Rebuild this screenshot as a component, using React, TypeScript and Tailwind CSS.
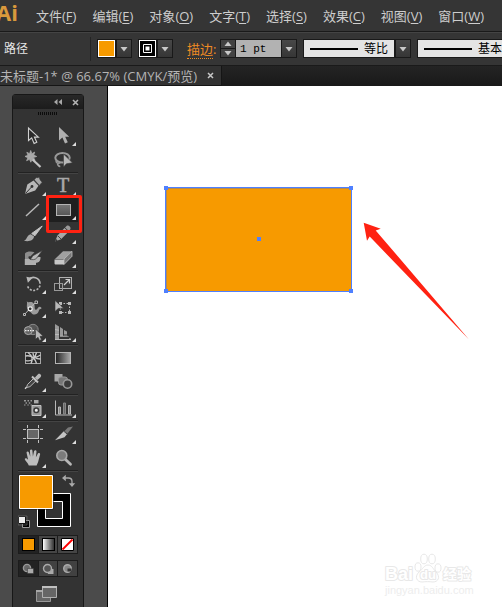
import type { ReactNode } from "react";

const MENUS = [
  ["文件", "F"],
  ["编辑", "E"],
  ["对象", "O"],
  ["文字", "T"],
  ["选择", "S"],
  ["效果", "C"],
  ["视图", "V"],
  ["窗口", "W"],
];

type Tool = { name: string; icon: ReactNode; more?: boolean; active?: boolean };

const LIGHT = "#b8b8b8";
const MID = "#777777";

const TOOL_GROUPS: Tool[][] = [
  [
    {
      name: "选择",
      icon: <path d="M10.5 4v12.5l3.2-2.6 2.4 5.6 2.7-1.2-2.4-5.2h4z" fill="#2a2a2a" stroke="#d0d0d0" strokeWidth="1.1" />,
    },
    {
      name: "直接选择",
      more: true,
      icon: <path d="M11 3v13.5l3.4-3 2.6 6 2.8-1.2-2.6-5.5h4z" fill="#b0b0b0" />,
    },
    {
      name: "魔棒",
      icon: (
        <>
          <path d="M12.7 2.5l1.2 3.2 2.8-1.6-1 3 3 1.4-3.2.9 1.6 3-3-1.2-1.3 3-1.3-2.9-2.9 1.4 1.3-3L7 8.4l3-1.1-1.2-3 2.8 1.4z" fill="#a8a8a8" stroke="#a8a8a8" strokeWidth=".8" />
          <path d="M14.5 11.5l8 7.5" stroke="#c4c4c4" strokeWidth="2.2" />
        </>
      ),
    },
    {
      name: "套索",
      icon: (
        <>
          <ellipse cx="14.5" cy="9.8" rx="7.2" ry="4.8" fill="none" stroke="#999" strokeWidth="2" />
          <path d="M8.5 12.5c-1.5 2 1.8 3.5 3.8 2.2M9.5 15c0 2 .8 3.4 2.8 3.5" fill="none" stroke="#999" strokeWidth="1.5" />
          <path d="M15.5 6v13l2.9-3.2 6-1z" fill={LIGHT} stroke="#3a3a3a" strokeWidth=".6" />
        </>
      ),
    },
  ],
  [
    {
      name: "钢笔",
      more: true,
      icon: (
        <>
          <path d="M7 20l2.3-9.5 6.2-4 5 5.3-3.3 4.8z" fill={LIGHT} />
          <path d="M16.2 5.8l2-2.3 2 .2.8-1 1.2 3.3 2 2.2-2.8 3.2z" fill="#a8a8a8" stroke="#333" strokeWidth=".6" />
          <path d="M7.5 19.5l6-6.5" stroke="#333" />
          <circle cx="14" cy="12.5" r="1.4" fill="#333" />
        </>
      ),
    },
    {
      name: "文字",
      more: true,
      icon: (
        <text x="15" y="18" textAnchor="middle" fontFamily="Liberation Serif, serif" fontSize="20" fill="#a8a8a8" stroke="#a8a8a8" strokeWidth=".5">
          T
        </text>
      ),
    },
    { name: "直线段", more: true, icon: <path d="M8 18L21 6" stroke="#b8b8b8" strokeWidth="1.5" /> },
    {
      name: "矩形",
      more: true,
      active: true,
      icon: <rect x="8.5" y="6.5" width="14" height="11" fill="url(#rectShade)" stroke="#b4b4b4" />,
    },
    {
      name: "画笔",
      icon: (
        <>
          <path d="M24.2 4l-7.3 9.8-3.2-2.3z" fill="#c4c4c4" stroke="#c4c4c4" strokeLinejoin="round" />
          <path d="M12.8 12.2l3.3 2.4c-.6 4.2-5 5.2-10.3 4.2 3.6-.8 2.6-6 7-6.6z" fill="#a8a8a8" />
        </>
      ),
    },
    {
      name: "铅笔",
      more: true,
      icon: (
        <>
          <path d="M7 19.5l2.5-6 7-7.5 4 3.8-7.5 7.4z" fill="#a8a8a8" />
          <path d="M17 5.5l1.8-1.7c1.6-1.3 5 1.8 3.4 3.6L20.8 9z" fill="#9a9a9a" />
          <path d="M10 14l3 3" stroke="#444" />
          <path d="M7 19.5l1-2.6 1.7 1.6z" fill="#333" />
        </>
      ),
    },
    {
      name: "斑点画笔",
      icon: (
        <>
          <path d="M7 7.5c2-2.5 6.5-2.3 9.5-1.2l-4.2 4.2c-2-.7-2.6 1-1 2.5H7z" fill="#8d8d8d" />
          <path d="M6.8 13h6.6c3.6.2 4.5-.8 6-2.2l3.1.2c.2 4-1.4 5.5-4.5 5.8V19H6.8z" fill="#b0b0b0" />
          <path d="M24.6 4.2l-6 8c-1.5 1.7-4.3 1.7-6.7 1.1 2.2-.6 1.6-3 3.8-4z" fill={LIGHT} stroke="#333" strokeWidth=".7" />
        </>
      ),
    },
    {
      name: "橡皮擦",
      more: true,
      icon: (
        <>
          <path d="M7 13l8-7.7h9L16 13z" fill="#a0a0a0" />
          <path d="M16 13l8-7.7v5L16 18.5z" fill={MID} stroke="#c4c4c4" strokeWidth=".8" />
          <path d="M6.5 13.5H16v5H8.2c-1.3 0-1.7-.7-1.7-1.6z" fill="#c8c8c8" />
        </>
      ),
    },
  ],
  [
    {
      name: "旋转",
      more: true,
      icon: (
        <>
          <path d="M10.3 8.2a6.5 6.5 0 0 1 11.8 3.6" fill="none" stroke={LIGHT} strokeWidth="1.6" />
          <path d="M22 13.5a6.5 6.5 0 0 1-12.7-.3" fill="none" stroke={LIGHT} strokeWidth="1.6" strokeDasharray="2 1.5" />
          <path d="M8.4 4.8l6 1.2-4.5 4.8z" fill={LIGHT} />
        </>
      ),
    },
    {
      name: "比例缩放",
      more: true,
      icon: (
        <>
          <rect x="11.5" y="5.5" width="12" height="11" fill="#3b3b3b" stroke="#b0b0b0" />
          <rect x="6.5" y="11.5" width="8" height="7" fill="none" stroke="#999" />
          <path d="M16 13l5-5M17.5 7.5h4v4" fill="none" stroke="#d0d0d0" strokeWidth="1.2" />
        </>
      ),
    },
    {
      name: "变形",
      more: true,
      icon: (
        <>
          <path d="M8.8 5c1.8 3.2 4.8-1.2 7.4 3.3 1 2.1-.2 5 1.6 5.5 1.6.3 2-2.7 3.7-3 1.7-.2 2.4 1.4 1.5 2.4-1.1-.7-1.7.1-2.3 2-1.2 3.5-5.4 4.4-7.3 1.8L9 12c-.5-2.5.5-4.5-.2-7z" fill="#9b9b9b" />
          <path d="M6.5 18.5L17 7" stroke={LIGHT} />
          <path d="M5.5 17.5h2v2h-2zM17 5h2.5v2.5H17z" fill="#333" stroke={LIGHT} />
          <circle cx="12.2" cy="12.8" r="2" fill="#333" stroke="#eee" strokeWidth="1.2" />
        </>
      ),
    },
    {
      name: "自由变换",
      icon: (
        <>
          <rect x="12.5" y="7.5" width="9" height="9" fill="none" stroke={LIGHT} strokeDasharray="1.5 1.5" />
          <path d="M11 6h3v3h-3zM20 6h3v3h-3zM11 15h3v3h-3zM20 15h3v3h-3z" fill={LIGHT} />
          <path d="M7 4.5v11l3.2-3 5.4-.3z" fill={LIGHT} stroke="#333" strokeWidth=".6" />
        </>
      ),
    },
    {
      name: "形状生成器",
      more: true,
      icon: (
        <>
          <circle cx="15" cy="9.5" r="5.2" fill="#555" stroke="#888" />
          <circle cx="10.3" cy="10.6" r="4" fill="#666" stroke="#aaa" />
          <path d="M7 10.6h11" stroke="#eee" strokeWidth="1.3" strokeDasharray="1.5 1" />
          <path d="M17.5 9v10.3l2.5-2 1.5 3.2 2-1-1.5-3 3-.5z" fill={LIGHT} stroke="#333" strokeWidth=".6" />
        </>
      ),
    },
    {
      name: "透视网格",
      more: true,
      icon: (
        <>
          <path d="M7 4l4 2.5V20H7zM12 7l3 2v7H12zM16 10l3 1.5V16h-3z" fill="#999" />
          <path d="M11 16.2h8.5l3.5 3.3H7M7 9.5l5 1M7 14.5h5" fill="none" stroke={LIGHT} />
          <path d="M11.5 6v11.5H24M15.5 8.5V15h6" fill="none" stroke="#333" />
        </>
      ),
    },
  ],
  [
    {
      name: "网格",
      icon: (
        <>
          <rect x="7.5" y="6.5" width="15" height="11" fill="#292929" stroke="#a8a8a8" />
          <path d="M10 6.5c4 3 5 7 3 11M7.5 10c5-1 9 1 11 7.5M7.5 14.5c6 2 10-3 11-8M15 7c0 4 3 6 7.5 6M15.5 11c3 1 5-1 7-2" fill="none" stroke="#c8c8c8" strokeWidth="1.3" />
        </>
      ),
    },
    { name: "渐变", icon: <rect x="7.5" y="6.5" width="15" height="11" fill="url(#toolGradient)" stroke="#b4b4b4" /> },
    {
      name: "吸管",
      more: true,
      icon: (
        <>
          <path d="M8.5 17.5l1-3 6.6-6.6 2.4 2.4-6.6 6.4z" fill="#444" stroke={LIGHT} />
          <path d="M7 18.8l1.5-1.5" stroke="#ddd" strokeWidth="1.3" />
          <path d="M14 6.5l6 6M18 8.5L21 5.5" stroke="#c4c4c4" strokeWidth="2" />
          <path d="M17 7.5l3-3.3c1.5-1.4 4.2 1 2.7 2.7l-3.2 3.2z" fill={LIGHT} />
        </>
      ),
    },
    {
      name: "混合",
      icon: (
        <>
          <rect x="6.5" y="4" width="8" height="7.5" fill="#a8a8a8" />
          <rect x="10.5" y="7" width="9" height="8" rx="2.5" fill="#777" stroke="#999" />
          <circle cx="19.5" cy="14" r="4.2" fill="#3a3a3a" stroke="#999" strokeWidth="1.6" />
        </>
      ),
    },
  ],
  [
    {
      name: "符号喷枪",
      more: true,
      icon: (
        <>
          <path d="M6 4h2v1.5H6zM9.5 4h1.5v1.5H9.5zM12.5 4H14v1.5h-1.5zM7.5 6.2H9v1.5H7.5zM10.8 6.2h1.5v1.5h-1.5zM6 8.4h1.5v1H6zM9.3 8.4h1.5v1H9.3zM12.5 8.4H14v1h-1.5z" fill="#999" />
          <path d="M16 4h4.5v3.4H16z" fill="#a8a8a8" />
          <path d="M14 9.5h9v10h-9z" fill="#999" stroke="#c4c4c4" />
          <circle cx="18.3" cy="14.2" r="2.3" fill="#eee" stroke="#3a3a3a" strokeWidth="1.5" />
        </>
      ),
    },
    {
      name: "柱形图",
      more: true,
      icon: (
        <>
          <path d="M7.5 4.5v14.5H24" fill="none" stroke={LIGHT} />
          <path d="M10.5 11h2v7h-2z" fill="#888" stroke={LIGHT} />
          <path d="M15.5 7h2v11h-2z" fill="#666" stroke="#888" />
          <path d="M20.5 9.5h2V18h-2z" fill="#888" stroke={LIGHT} />
        </>
      ),
    },
  ],
  [
    {
      name: "画板",
      icon: (
        <>
          <rect x="9.5" y="7.5" width="11" height="9" fill="#666" stroke="#c0c0c0" />
          <path d="M9.5 3v3M20.5 3v3M9.5 18v3M20.5 18v3M5 7.5h3M5 16.5h3M22 7.5h3M22 16.5h3" stroke="#c0c0c0" />
        </>
      ),
    },
    {
      name: "切片",
      more: true,
      icon: (
        <>
          <path d="M25 4.5l-5.5 7-3-2.5 3.5-3.5z" fill="#777" />
          <path d="M16 9l3.3 2.8-2.8 3.4L7 18.2z" fill="#c4c4c4" />
          <path d="M15.5 9l4.3 3.6" stroke="#444" />
        </>
      ),
    },
    {
      name: "抓手",
      more: true,
      icon: (
        <path
          d="M10.8 19.5c-.6-2.5-3.7-4.8-4.1-6.5.7-1.4 2.4-.6 3.4.8L8.5 6.5c.3-1.4 2-1.2 2.4 0l1.4 4.3-.4-6.2c.5-1.4 2.2-1.3 2.5 0l.5 6 1.2-5.7c.8-1.2 2.4-.8 2.4.5l-.6 5.9 2-3.8c1-.9 2.4-.3 2.2 1l-2 7.6-1.5 3.4z"
          fill="#bdbdbd"
        />
      ),
    },
    {
      name: "缩放",
      icon: (
        <>
          <path d="M17.5 13.5l5 4.8" stroke={LIGHT} strokeWidth="2.8" strokeLinecap="round" />
          <circle cx="13.8" cy="9.5" r="5" fill="#7c7c7c" stroke="#a8a8a8" strokeWidth="1.6" />
        </>
      ),
    },
  ],
];

function DropArrow() {
  return (
    <svg className="block h-1.5 w-2" viewBox="0 0 8 6" aria-hidden="true">
      <path d="M.5 1h7L4 5.5z" fill="#c8c8c8" />
    </svg>
  );
}

function DropButton({ label }: { label: string }) {
  return (
    <button
      aria-label={label}
      className="flex h-[19px] w-4 shrink-0 items-center justify-center border border-[#191919] bg-linear-to-b from-[#484848] to-[#363636]"
    >
      <DropArrow />
    </button>
  );
}

function MenuBar() {
  return (
    <header className="flex h-[31px] items-center bg-[#353535]">
      <div className="-ml-1 w-10 shrink-0 pb-2 font-['Open_Sans',sans-serif] text-[22px] leading-5 font-bold text-[#d9993c]">Ai</div>
      <nav className="flex gap-4 text-[13px] leading-5 whitespace-nowrap text-[#cdcdcd]">
        {MENUS.map(([label, key]) => (
          <button key={key}>
            {label}(<u className="underline-offset-2">{key}</u>)
          </button>
        ))}
      </nav>
    </header>
  );
}

function StrokeProfile({ value }: { value: string }) {
  return (
    <div className="flex shrink-0">
      <label className="flex h-[19px] w-[92px] items-center gap-1.5 border border-[#191919] bg-[#e4e4e4] pl-1.5">
        <svg className="h-0.5 w-12" aria-hidden="true">
          <rect width="100%" height="2" fill="#000" />
        </svg>
        <select aria-label="描边样式" className="appearance-none bg-transparent text-[12px] leading-4 text-black">
          <option>{value}</option>
        </select>
      </label>
      <DropButton label={value} />
    </div>
  );
}

function ControlBar() {
  return (
    <div className="flex h-[35px] items-center overflow-hidden border-t border-b border-[#1a1a1a] bg-[#353535] text-[12px] whitespace-nowrap shadow-[inset_0_1px_#444]">
      <div className="h-6 w-[91px] shrink-0 border-r border-[#242424] pl-1 leading-6 text-[#e6e6e6]">路径</div>
      <div className="ml-1.5 flex shrink-0">
        <button aria-label="填色" className="size-[19px] border border-[#191919] bg-white p-px">
          <span className="block size-full bg-[#f79a00]" />
        </button>
        <DropButton label="填色选项" />
      </div>
      <div className="ml-1.5 flex shrink-0">
        <button aria-label="描边颜色" className="size-[19px] border border-[#191919] bg-white p-px">
          <svg viewBox="0 0 15 15" className="block size-full">
            <rect width="15" height="15" fill="#000" />
            <path d="M3.5 3.5h8v8h-8z" fill="none" stroke="#fff" />
            <path d="M5.5 5.5h4v4h-4z" fill="#fff" />
          </svg>
        </button>
        <DropButton label="描边选项" />
      </div>
      <label htmlFor="weight" className="ml-3.5 w-[33px] shrink-0 text-[13px] leading-4 text-[#ee8a24]">
        <span className="border-b border-dotted border-[#ee8a24]">描边</span>:
      </label>
      <div className="flex shrink-0">
        <div className="flex h-[19px] w-4 flex-col border border-[#191919] bg-[#424242]">
          <button aria-label="增加" className="flex flex-1 rotate-180 items-center justify-center">
            <DropArrow />
          </button>
          <button aria-label="减少" className="flex flex-1 items-center justify-center border-t border-[#191919]">
            <DropArrow />
          </button>
        </div>
        <input
          id="weight"
          defaultValue="1 pt"
          className="h-[19px] w-[45px] border-y border-[#191919] bg-[#b2b2b2] pl-1 font-['Liberation_Mono',monospace] text-[11px] text-black"
        />
        <DropButton label="粗细" />
      </div>
      <div className="ml-1.5 flex gap-1.5">
        <StrokeProfile value="等比" />
        <StrokeProfile value="基本" />
      </div>
    </div>
  );
}

function DocumentTabs() {
  return (
    <div className="flex h-5 bg-linear-to-b from-[#242424] to-[#191919]">
      <div className="flex w-[222px] items-center justify-between border-r border-b border-[#151515] bg-[#323232] pr-1.5 whitespace-nowrap">
        <span className="text-[13px] leading-4 text-[#b4b4b4]">未标题-1* @ 66.67% (CMYK/预览)</span>
        <button aria-label="关闭文档" className="p-px">
          <svg viewBox="0 0 7 7" className="size-[7px]">
            <path d="M1 1l5 5M6 1L1 6" stroke="#c8c8c8" strokeWidth="1.5" />
          </svg>
        </button>
      </div>
    </div>
  );
}

function ToolButton({ tool }: { tool: Tool }) {
  return (
    <div className="relative">
      <button
        aria-label={tool.name}
        className={tool.active ? "block h-6 w-[30px] bg-[#1f1f1f]" : "block h-6 w-[30px]"}
      >
        <svg viewBox="0 0 30 24" className="block h-6 w-[30px]">
          {tool.icon}
          {tool.more && <path d="M28 18v4h-4z" fill="#dedede" />}
        </svg>
      </button>
      {tool.active && <div className="absolute -top-[3px] -left-0.5 z-10 h-[38px] w-9 rounded-xs border-3 border-[#ff2212]" />}
    </div>
  );
}

function ColorWell() {
  return (
    <svg viewBox="0 0 60 60" className="block h-[60px] w-[60px]" role="img" aria-label="填色和描边">
      <path d="M19.5 21.5h33v33h-33z" fill="#000" stroke="#fff" />
      <path d="M27.5 29.5h17v17h-17z" fill="#333" stroke="#fff" />
      <path d="M.5 2.5h35v35H.5z" fill="#1d1d1d" />
      <path d="M1.5 3.5h33v33h-33z" fill="#f79a00" stroke="#fff" />
      <path d="M46 6h4.5c2 0 3.5 1.3 3.5 3.5V12" fill="none" stroke="#aaa" strokeWidth="1.3" />
      <path d="M44 6l3.8-3.2v6.4zM50.8 11.2h6.4L54 15z" fill="#aaa" />
      <path d="M4.5 48.5h7v7h-7z" fill="#000" stroke="#999" />
      <path d="M.5 44.5h7v7h-7z" fill="#eee" stroke="#111" />
      <path d="M0 44h9v9H0z" fill="none" stroke="#777" strokeWidth=".6" />
    </svg>
  );
}

function ToolPanel() {
  return (
    <section className="flex w-[72px] shrink-0 flex-col rounded-t-sm border border-b-0 border-[#171717] bg-[#333333]">
      <div className="flex h-[14px] items-center justify-end gap-2.5 bg-linear-to-b from-[#282828] to-[#1c1c1c] pr-1">
        <button aria-label="折叠">
          <svg viewBox="0 0 8 6" className="block h-1.5 w-2">
            <path d="M3.5 0v6L0 3zM8 0v6L4.5 3z" fill="#a8a8a8" />
          </svg>
        </button>
        <button aria-label="关闭面板">
          <svg viewBox="0 0 7 7" className="block size-[7px]">
            <path d="M1 1l5 5M6 1L1 6" stroke="#b4b4b4" strokeWidth="1.6" />
          </svg>
        </button>
      </div>
      <div className="flex h-[15px] justify-center pt-[3px]">
        <svg viewBox="0 0 20 3" className="h-[3px] w-5" aria-hidden="true">
          <path d="M0 1.5h20" stroke="#0c0c0c" strokeWidth="3" strokeDasharray="1 1" />
        </svg>
      </div>
      <div className="flex flex-col items-center">
        {TOOL_GROUPS.map((group) => (
          <div key={group[0].name} className="mb-px grid grid-cols-2 border-b border-[#222] shadow-[0_1px_#444]">
            {group.map((tool) => (
              <ToolButton key={tool.name} tool={tool} />
            ))}
          </div>
        ))}
        <ColorWell />
        <div className="mt-[3px] flex h-[19px] w-[60px] divide-x divide-[#1c1c1c] border border-[#1c1c1c] bg-[#454545]">
          <button aria-label="颜色" className="flex flex-1 items-center justify-center bg-[#222]">
            <span className="size-[13px] border border-black bg-[#f79a00]" />
          </button>
          <button aria-label="渐变填色" className="flex flex-1 items-center justify-center">
            <span className="size-[13px] border border-black bg-linear-to-r from-white to-[#333]" />
          </button>
          <button aria-label="无" className="flex flex-1 items-center justify-center">
            <svg viewBox="0 0 13 13" className="size-[13px]">
              <path d="M.5.5h12v12H.5z" fill="#fff" stroke="#000" />
              <path d="M1.5 11.5l10-10" stroke="#f00" strokeWidth="1.8" />
            </svg>
          </button>
        </div>
        <div className="mt-1.5 flex h-[17px] w-[60px] divide-x divide-[#1c1c1c] border border-[#1c1c1c] bg-[#414141]">
          <button aria-label="正常绘图" className="flex flex-1 items-center justify-center bg-[#222]">
            <svg viewBox="0 0 12 12" className="size-3">
              <circle cx="5" cy="5" r="3.6" fill="#666" stroke="#999" strokeWidth="1.4" />
              <path d="M5.5 5.5h6v5h-6z" fill="#aaa" stroke="#333" strokeWidth=".5" />
            </svg>
          </button>
          <button aria-label="背面绘图" className="flex flex-1 items-center justify-center">
            <svg viewBox="0 0 12 12" className="size-3">
              <path d="M6 6h5.5v5H6z" fill="#aaa" />
              <circle cx="5.5" cy="5.5" r="4" fill="#555" stroke="#aaa" strokeWidth="1.4" />
            </svg>
          </button>
          <button aria-label="内部绘图" className="flex flex-1 items-center justify-center">
            <svg viewBox="0 0 12 12" className="size-3">
              <circle cx="5.5" cy="5.5" r="3.8" fill="#888" stroke="#aaa" strokeWidth="1.4" />
              <path d="M5.5 5.5h4v3h-4z" fill="#333" />
            </svg>
          </button>
        </div>
        <button aria-label="更改屏幕模式" className="mt-2 mr-1">
          <svg viewBox="0 0 22 18" className="block h-[18px] w-[22px]">
            <path d="M1.5 5.5h14v11h-14z" fill="#666" stroke="#999" />
            <path d="M1 5h15v2H1z" fill="#a8a8a8" />
            <path d="M7.5 1.5h14v11h-14z" fill="#666" stroke="#b0b0b0" />
            <path d="M7 1h15v2H7z" fill="#c0c0c0" />
          </svg>
        </button>
      </div>
    </section>
  );
}

function Watermark() {
  return (
    <svg viewBox="0 0 92 44" className="absolute right-[26px] bottom-[11px] h-11 w-[92px]" role="img">
      <g fill="#fff" stroke="#e8e8e8" strokeLinejoin="round">
        <ellipse cx="34" cy="15" rx="3" ry="4.2" />
        <ellipse cx="40" cy="7" rx="3.3" ry="4.8" />
        <ellipse cx="48" cy="7" rx="3.3" ry="4.8" />
        <ellipse cx="54" cy="16" rx="3" ry="4.2" />
        <path d="M44 13c4 0 5 4 8 7 5 5 2 10-3 10-4-.5-7-.5-11 0-5 0-8-5-3-10C39 17 40 13 44 13z" />
        <g fontFamily="Liberation Sans, Noto Sans CJK SC, sans-serif" fontWeight="bold" strokeWidth="2" paintOrder="stroke">
          <text x="1" y="28" fontSize="18">Bai</text>
          <text x="36" y="27" fontSize="13">du</text>
          <text x="59" y="27" fontSize="14">经验</text>
        </g>
      </g>
      <text x="1" y="42" fontSize="11" fontFamily="Liberation Sans, sans-serif" fill="#ededed">
        jingyan.baidu.com
      </text>
    </svg>
  );
}

function Canvas() {
  return (
    <main className="relative flex-1 overflow-hidden bg-white">
      <svg className="block h-[280px] w-full">
        <rect x="58.5" y="102.5" width="185" height="103" fill="#f79a00" stroke="#b58a50" />
        <rect x="57.5" y="101.5" width="186" height="104" fill="none" stroke="#4f80ff" />
        <path d="M56 100h4v4h-4zM241 100h4v4h-4zM56 203h4v4h-4zM241 203h4v4h-4zM149 151h4v4h-4z" fill="#4f80ff" />
        <path d="M255.7 136.7l17 6-5 1.7 93.3 109.1-99.3-102.9-2.7 4.2z" fill="#ff2212" />
      </svg>
      <Watermark />
    </main>
  );
}

export default function App() {
  return (
    <div className="flex min-h-screen flex-col overflow-hidden bg-[#353535] font-['Open_Sans','Noto_Sans_CJK_SC',sans-serif]">
      <svg className="absolute size-0" aria-hidden="true">
        <defs>
          <linearGradient id="rectShade" x1="0" y1="0" x2="0" y2="1">
            <stop offset="0" stopColor="#777" />
            <stop offset="1" stopColor="#555" />
          </linearGradient>
          <linearGradient id="toolGradient">
            <stop offset="0" stopColor="#222" />
            <stop offset="1" stopColor="#aaa" />
          </linearGradient>
        </defs>
      </svg>
      <MenuBar />
      <ControlBar />
      <DocumentTabs />
      <div className="flex flex-1">
        <aside className="flex w-[108px] shrink-0 border-r border-black bg-[#4b4b4b] pt-2 pl-3">
          <ToolPanel />
        </aside>
        <Canvas />
      </div>
    </div>
  );
}
